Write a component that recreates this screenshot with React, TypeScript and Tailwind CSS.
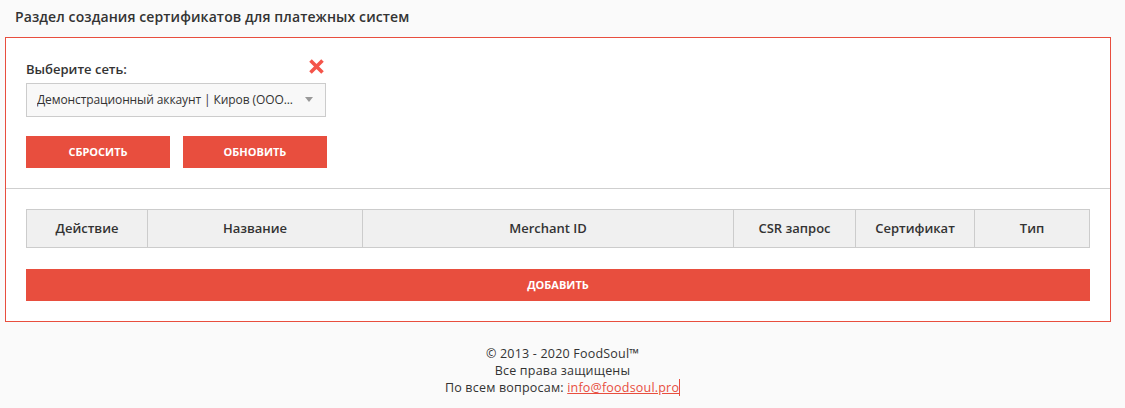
import React from "react";

const red = "bg-[#e84e3e]";

export default function App() {
  const cols = [
    { label: "Действие", w: "w-[120px]" },
    { label: "Название", w: "w-[215px]" },
    { label: "Merchant ID", w: "w-[371px]" },
    { label: "CSR запрос", w: "w-[122px]" },
    { label: "Сертификат", w: "w-[119px]" },
    { label: "Тип", w: "flex-1" },
  ];
  return (
    <div className="min-h-[408px] w-full bg-[#fafafa] text-[#333] font-['Open_Sans',sans-serif]">
      <div className="pl-[15px] pt-[7px] h-[37px] text-[14px] font-semibold leading-[20px] text-[#333] tracking-[0.1px]">
        Раздел создания сертификатов для платежных систем
      </div>
      <div className="ml-[5px] mr-[14px] border border-[#e84e3e] bg-white">
        <div className="px-[20px] pt-[21px] pb-[20px] border-b border-[#cfcfcf]">
          <div className="relative w-[300px]">
            <div className="text-[13px] font-semibold leading-[20px] h-[24px]">Выберите сеть:</div>
            <svg className="absolute right-[1px] top-[-1px]" width="17" height="17" viewBox="0 0 17 17">
              <path d="M2.5 2.5 L14.5 14.5 M14.5 2.5 L2.5 14.5" stroke="#f4544a" strokeWidth="3.6" strokeLinecap="butt" />
            </svg>
            <div className="h-[34px] border border-[#cccccc] bg-[#f8f8f8] flex items-center pl-[10px] pr-[12px] text-[12px] tracking-[-0.1px] text-[#333]">
              <span className="flex-1 whitespace-nowrap overflow-hidden">Демонстрационный аккаунт | Киров (ООО...</span>
              <svg width="8" height="6" viewBox="0 0 8 6" className="ml-2 shrink-0">
                <path d="M0 0 L8 0 L4 5 Z" fill="#999" />
              </svg>
            </div>
          </div>
          <div className="flex gap-[13px] mt-[19px]">
            <button className={`w-[144px] h-[32px] ${red} text-white text-[11px] font-bold uppercase`}>Сбросить</button>
            <button className={`w-[144px] h-[32px] ${red} text-white text-[11px] font-bold uppercase`}>Обновить</button>
          </div>
        </div>
        <div className="px-[20px] pt-[20px] pb-[20px]">
          <div className="flex border border-[#cccccc] bg-[#f0f0f0] h-[39px]">
            {cols.map((c, i) => (
              <div
                key={c.label}
                className={`${c.w} ${i > 0 ? "border-l border-[#cccccc]" : ""} flex items-center justify-center text-[13px] font-semibold text-[#333]`}
              >
                {c.label}
              </div>
            ))}
          </div>
          <button className={`mt-[21px] w-full h-[32px] ${red} text-white text-[11px] font-bold uppercase`}>Добавить</button>
        </div>
      </div>
      <div className="pt-[23px] flex flex-col items-center text-[12.5px] leading-[17px] text-[#333] tracking-[0.2px]">
        <div>© 2013 - 2020 FoodSoul™</div>
        <div>Все права защищены</div>
        <div>
          По всем вопросам: <a className="text-[#e84e3e] underline border-r border-[#e84e3e]">info@foodsoul.pro</a>
        </div>
      </div>
    </div>
  );
}
